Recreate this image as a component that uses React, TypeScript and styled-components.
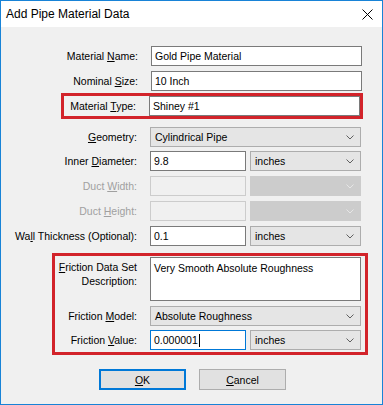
import React from 'react';
import styled, { createGlobalStyle } from 'styled-components';

const GlobalStyle = createGlobalStyle`
  html, body {
    margin: 0;
    padding: 0;
    background: #ffffff;
  }
  body {
    font-family: "Liberation Sans", Arial, sans-serif;
  }
`;

const Window = styled.div`
  box-sizing: border-box;
  width: 383px;
  height: 405px;
  border: 1px solid #1883d7;
  display: flex;
  flex-direction: column;
  background: #f0f0f0;
`;

const TitleBar = styled.div`
  height: 26px;
  background: #ffffff;
  display: flex;
  align-items: center;
  justify-content: space-between;
  padding: 0 9px 0 5px;
  font-size: 12px;
  color: #000000;
`;

const Client = styled.div`
  flex: 1;
  display: flex;
  flex-direction: column;
  padding-top: 19px;
  font-size: 10.5px;
  color: #000000;
`;

const Row = styled.div<{ $top?: number; $inset?: number }>`
  display: flex;
  align-items: flex-start;
  gap: 13px;
  margin-top: ${p => p.$top ?? 5}px;
  padding-right: ${p => p.$inset ?? 20}px;
`;

const Label = styled.div<{ $disabled?: boolean }>`
  flex: 1;
  text-align: right;
  line-height: 20px;
  white-space: nowrap;
  color: ${p => (p.$disabled ? '#a0a0a0' : '#000000')};
`;

const MultiLabel = styled(Label)`
  line-height: 14px;
  padding-top: 3px;
  white-space: normal;
`;

const Field = styled.div`
  width: 211px;
  display: flex;
  gap: 4px;
`;

const TextBox = styled.div<{ $width?: number; $disabled?: boolean; $focused?: boolean }>`
  box-sizing: border-box;
  height: 20px;
  width: ${p => (p.$width ? `${p.$width}px` : '100%')};
  flex-shrink: 0;
  border: 1px solid ${p => (p.$focused ? '#0078d7' : p.$disabled ? '#cccccc' : '#7a7a7a')};
  background: ${p => (p.$disabled ? '#f0f0f0' : '#ffffff')};
  padding: 0 3px;
  line-height: 18px;
  white-space: nowrap;
  display: flex;
  align-items: center;
`;

const TextArea = styled.div`
  box-sizing: border-box;
  width: 100%;
  height: 44px;
  border: 1px solid #7a7a7a;
  background: #ffffff;
  padding: 3px 3px;
  line-height: 14px;
`;

const Caret = styled.span`
  display: inline-block;
  width: 1px;
  height: 13px;
  background: #000000;
  margin-left: 1px;
`;

const ComboBox = styled.div<{ $disabled?: boolean }>`
  box-sizing: border-box;
  flex: 1;
  height: 20px;
  border: 1px solid ${p => (p.$disabled ? '#cccccc' : '#adadad')};
  background: ${p => (p.$disabled ? '#cccccc' : '#e5e5e5')};
  display: flex;
  align-items: center;
  justify-content: space-between;
  padding: 0 6px 0 4px;
  white-space: nowrap;
`;

const Highlight = styled.div<{ $left: number; $right: number; $top: number }>`
  margin: ${p => p.$top}px ${p => p.$right}px 0 ${p => p.$left}px;
  border: 3px solid #d2232a;
  display: flex;
  flex-direction: column;
`;

const ButtonBar = styled.div`
  display: flex;
  justify-content: center;
  gap: 13px;
  margin-top: 14px;
  padding-left: 2px;
`;

const Button = styled.div<{ $default?: boolean }>`
  box-sizing: border-box;
  width: 87px;
  height: 21px;
  border: ${p => (p.$default ? '2px solid #0078d7' : '1px solid #adadad')};
  background: #e1e1e1;
  display: flex;
  align-items: center;
  justify-content: center;
  font-size: 10.5px;
`;

const Chevron = ({ disabled }: { disabled?: boolean }) => (
  <svg width="8" height="5" viewBox="0 0 8 5">
    <path d="M0.5 0.5 L4 4 L7.5 0.5" fill="none" stroke={disabled ? '#e6e6e6' : '#606060'} strokeWidth="1" />
  </svg>
);

const CloseIcon = () => (
  <svg width="11" height="11" viewBox="0 0 11 11">
    <path d="M0.5 0.5 L10.5 10.5 M10.5 0.5 L0.5 10.5" stroke="#000000" strokeWidth="1" />
  </svg>
);

const Combo = ({ value, disabled }: { value?: string; disabled?: boolean }) => (
  <ComboBox $disabled={disabled}>
    <span>{value}</span>
    <Chevron disabled={disabled} />
  </ComboBox>
);

export default function App() {
  return (
    <>
      <GlobalStyle />
      <Window>
        <TitleBar>
          <span>Add Pipe Material Data</span>
          <CloseIcon />
        </TitleBar>
        <Client>
          <Row $top={0}>
            <Label>Material <u>N</u>ame:</Label>
            <Field><TextBox>Gold Pipe Material</TextBox></Field>
          </Row>
          <Row>
            <Label>Nominal <u>S</u>ize:</Label>
            <Field><TextBox>10 Inch</TextBox></Field>
          </Row>
          <Highlight $left={60} $right={19} $top={2}>
            <Row $top={0} $inset={0}>
              <Label>Material <u>T</u>ype:</Label>
              <Field><TextBox>Shiney #1</TextBox></Field>
            </Row>
          </Highlight>
          <Row $top={8} $inset={21}>
            <Label><u>G</u>eometry:</Label>
            <Field><Combo value="Cylindrical Pipe" /></Field>
          </Row>
          <Row $top={4} $inset={21}>
            <Label>Inner <u>D</u>iameter:</Label>
            <Field>
              <TextBox $width={96}>9.8</TextBox>
              <Combo value="inches" />
            </Field>
          </Row>
          <Row $inset={21}>
            <Label $disabled>Duct <u>W</u>idth:</Label>
            <Field>
              <TextBox $width={96} $disabled />
              <Combo disabled />
            </Field>
          </Row>
          <Row $inset={21}>
            <Label $disabled>Duct <u>H</u>eight:</Label>
            <Field>
              <TextBox $width={96} $disabled />
              <Combo disabled />
            </Field>
          </Row>
          <Row $inset={21}>
            <Label>Wa<u>l</u>l Thickness (Optional):</Label>
            <Field>
              <TextBox $width={96}>0.1</TextBox>
              <Combo value="inches" />
            </Field>
          </Row>
          <Highlight $left={51} $right={14} $top={7}>
            <Row $top={1} $inset={4}>
              <MultiLabel><u>F</u>riction Data Set<br />Description:</MultiLabel>
              <Field><TextArea>Very Smooth Absolute Roughness</TextArea></Field>
            </Row>
            <Row $top={5} $inset={4}>
              <Label>Friction <u>M</u>odel:</Label>
              <Field><Combo value="Absolute Roughness" /></Field>
            </Row>
            <Row $top={4} $inset={4}>
              <Label>Friction <u>V</u>alue:</Label>
              <Field>
                <TextBox $width={96} $focused>0.000001<Caret /></TextBox>
                <Combo value="inches" />
              </Field>
            </Row>
            <div style={{ height: 2 }} />
          </Highlight>
          <ButtonBar>
            <Button $default><u>O</u>K</Button>
            <Button><u>C</u>ancel</Button>
          </ButtonBar>
        </Client>
      </Window>
    </>
  );
}
